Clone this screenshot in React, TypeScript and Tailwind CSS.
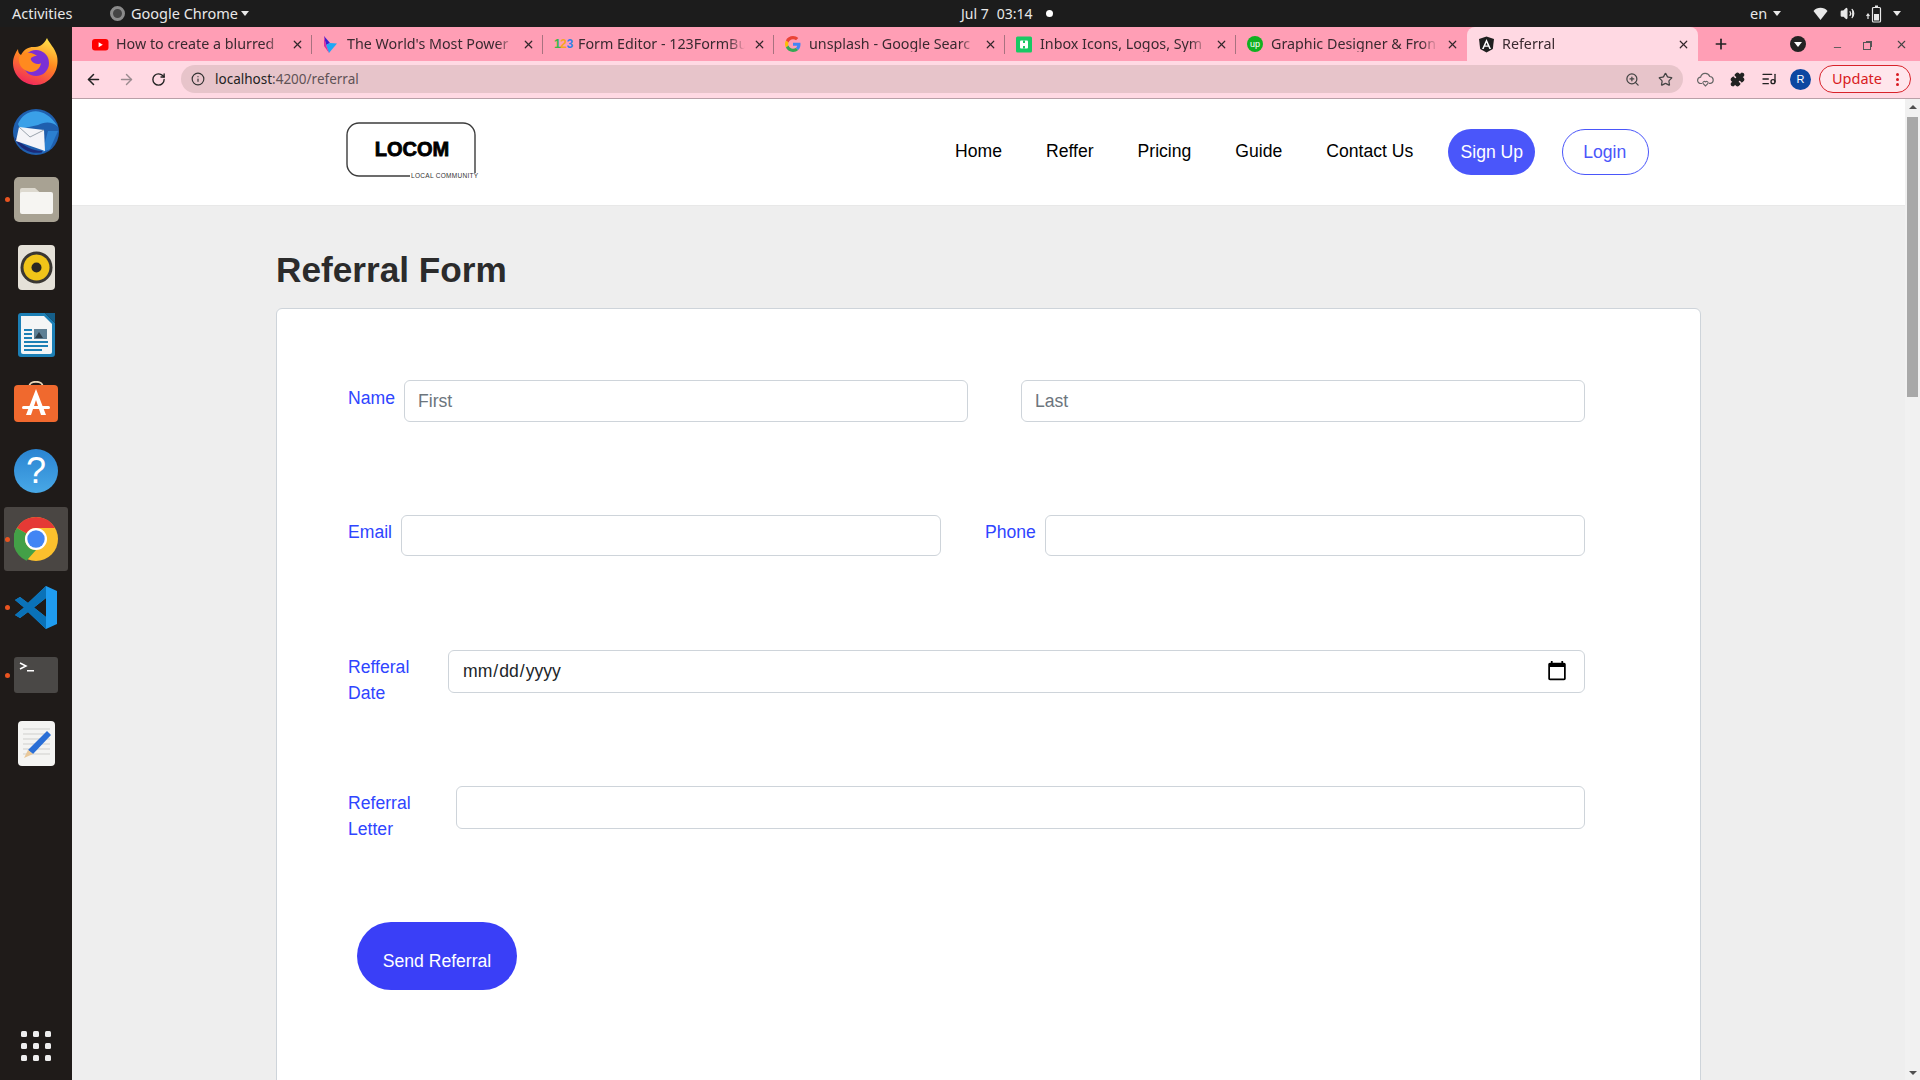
import { ArrowLeft, ArrowRight, RotateCw, Info, ZoomIn, Star, Puzzle, ListMusic, X, Plus, Minus, Volume2 } from "lucide-react";
import type { ReactNode } from "react";

const ubuntu = "font-['Noto_Sans','Open_Sans',sans-serif]";

function YouTubeIcon() {
  return (
    <svg width="17" height="17" viewBox="0 0 17 17">
      <rect x="0" y="3" width="16.500" height="11.500" rx="3" fill="#f00" />
      <path d="M6.600 6.200 L10.800 8.700 L6.600 11.200 Z" fill="#fff" />
    </svg>
  );
}

function ArrowLogo() {
  return (
    <svg width="16" height="17" viewBox="0 0 16 17">
      <path d="M1 0 L7 7 L3 9 Z" fill="#3a1fd1" />
      <path d="M3 9 L7 7 L14 7.500 L6 17 Z" fill="#1fa8f5" />
      <path d="M1 0 L3 9 L6 17 L1 10 Z" fill="#d62fa0" />
    </svg>
  );
}

function FormBuilderIcon() {
  return (
    <span className="flex items-center font-['Liberation_Sans',sans-serif] text-[12px] leading-none font-bold tracking-[-0.500px]">
      <span className="text-[#39b54a]">1</span>
      <span className="text-[#f5a623]">2</span>
      <span className="text-[#2f80ed]">3</span>
    </span>
  );
}

function GoogleIcon() {
  return (
    <svg width="16" height="16" viewBox="0 0 48 48">
      <path fill="#EA4335" d="M24 9.500c3.500 0 6.700 1.300 9.100 3.500l6.800-6.800C35.800 2.400 30.300 0 24 0 14.600 0 6.500 5.400 2.600 13.200l7.900 6.200C12.400 13.700 17.700 9.500 24 9.500z" />
      <path fill="#4285F4" d="M46.500 24.500c0-1.600-.2-3.200-.4-4.500H24v9h12.700c-.6 3-2.200 5.500-4.700 7.200l7.600 5.900c4.400-4.100 6.900-10.100 6.900-17.600z" />
      <path fill="#FBBC05" d="M10.500 28.600c-.5-1.400-.8-3-.8-4.600s.3-3.200.8-4.600l-7.900-6.200C.9 16.500 0 20.100 0 24s.9 7.500 2.600 10.800l7.900-6.200z" />
      <path fill="#34A853" d="M24 48c6.500 0 11.900-2.100 15.600-5.900L32 36.200c-2.100 1.400-4.800 2.300-8 2.300-6.300 0-11.600-4.200-13.500-9.900l-7.900 6.200C6.500 42.600 14.600 48 24 48z" />
    </svg>
  );
}

function InboxIcon() {
  return (
    <svg width="16" height="17" viewBox="0 0 16 17">
      <rect x="0" y="0.500" width="16" height="16" rx="1.500" fill="#18c964" />
      <rect x="4" y="4.500" width="8" height="8" rx="1" fill="#fff" />
      <rect x="7" y="4.500" width="2" height="2.500" fill="#18c964" />
      <rect x="7" y="10" width="2" height="2.500" fill="#18c964" />
    </svg>
  );
}

function UpworkIcon() {
  return (
    <span className="flex h-[16px] w-[16px] items-center justify-center rounded-full bg-[#10b020] font-['Liberation_Sans',sans-serif] text-[9px] leading-none text-white">
      up
    </span>
  );
}

function AngularIcon() {
  return (
    <svg width="17" height="17" viewBox="0 0 17 17">
      <path d="M8.500 0.500 L16 3 L14.800 13 L8.500 16.500 L2.200 13 L1 3 Z" fill="#1f1f1f" />
      <path d="M8.500 3 L4 13 L5.700 13 L6.600 10.800 L10.400 10.800 L11.300 13 L13 13 Z M7.300 9.400 L8.500 6.500 L9.700 9.400 Z" fill="#fff" />
    </svg>
  );
}

function Tab({ icon, title, active, divider }: { icon: ReactNode; title: string; active?: boolean; divider?: boolean }) {
  return (
    <div className={`relative flex h-full w-[231px] shrink-0 items-center pl-[11px] ${active ? "rounded-t-lg bg-[#ffd9e3]" : ""}`}>
      <span className="flex w-[24px] shrink-0 items-center">{icon}</span>
      <span className="w-[167px] text-[14.300px] leading-[16px] whitespace-nowrap text-[#3a2a30] [mask-image:linear-gradient(to_right,black_90%,transparent)]">
        {title}
      </span>
      <X size={13} strokeWidth={2.200} className="ml-[8px] text-[#33272b]" />
      {divider && <span className="absolute top-[8px] right-0 h-[19px] w-px bg-[#a8727f]" />}
    </div>
  );
}

function FirefoxIcon() {
  return (
    <svg width="46" height="48" viewBox="0 0 46 48" className="-mt-[2px]">
      <defs>
        <linearGradient id="ffA" x1="0.700" y1="0" x2="0.300" y2="1">
          <stop offset="0" stopColor="#ffe14a" />
          <stop offset="0.450" stopColor="#ff8a1f" />
          <stop offset="1" stopColor="#f0245f" />
        </linearGradient>
      </defs>
      <path d="M34 0 C36 5 42 10 44 18 C47 32 37 47 23 47 C10 47 0 37 0 25 C0 19 3 14 5 11 C5 14 6 16 8 17 C11 11 16 9 20 9 C26 9 30 8 34 0Z" fill="url(#ffA)" />
      <circle cx="23" cy="25" r="13" fill="#7b2fd6" />
      <path d="M6 19 C12 13 20 14 24 18 C20 18 17 20 18 22 C20 26 26 27 28 25 C27 32 20 36 14 33 C8 31 5 25 6 19Z" fill="#ff8a1f" />
    </svg>
  );
}

function ThunderbirdIcon() {
  return (
    <svg width="48" height="48" viewBox="0 0 48 48">
      <circle cx="24" cy="25" r="23" fill="#1f5fae" />
      <path d="M6 17 C12 2 32 -3 46 20 C40 14 32 15 26 18 L8 22Z" fill="#3aa0e8" />
      <path d="M2 30 C14 42 26 46 36 43 C28 48 10 48 2 30Z" fill="#1b2a78" />
      <path d="M36 24 L46 24 L38 42 L30 46Z" fill="#2b7fd0" />
      <path d="M7 20 L32 23 L33 44 L4 34 Z" fill="#f4f4f8" />
      <path d="M7 20 L18 30 L32 23" fill="none" stroke="#9aa3ad" strokeWidth="1" />
    </svg>
  );
}

function FilesIcon() {
  return (
    <svg width="45" height="45" viewBox="0 0 45 45">
      <rect width="45" height="45" rx="5" fill="#a8a293" />
      <path d="M6 13 a2 2 0 0 1 2-2 h13 l5 4.500 v6 H6Z" fill="#ddd9cf" />
      <rect x="6" y="15" width="33" height="22" rx="2" fill="#f6f5f2" />
    </svg>
  );
}

function RhythmboxIcon() {
  return (
    <svg width="37" height="45" viewBox="0 0 37 45">
      <rect width="37" height="45" rx="4" fill="#e5e1d8" />
      <circle cx="18.500" cy="22.500" r="16" fill="#3a3733" />
      <circle cx="18.500" cy="22.500" r="13" fill="#f0c419" />
      <circle cx="18.500" cy="22.500" r="5" fill="#2a2723" />
    </svg>
  );
}

function WriterIcon() {
  return (
    <svg width="37" height="44" viewBox="0 0 37 44">
      <path d="M3 0 H27 L37 10 V41 a3 3 0 0 1-3 3 H3 a3 3 0 0 1-3-3 V3 a3 3 0 0 1 3-3Z" fill="#1c7fb5" />
      <path d="M3 3 H26 L34 11 V39 a2 2 0 0 1-2 2 H5 a2 2 0 0 1-2-2Z" fill="#f4f5f6" />
      <path d="M27 0 L37 0 V10Z" fill="#155f8a" />
      <rect x="6" y="16" width="8" height="2" fill="#1c7fb5" />
      <rect x="6" y="20" width="8" height="2" fill="#1c7fb5" />
      <rect x="6" y="24" width="8" height="2" fill="#1c7fb5" />
      <rect x="16" y="16" width="13" height="10" fill="#5d7f95" />
      <path d="M17 25 L21 19 L25 25Z" fill="#2d3e4a" />
      <rect x="6" y="28" width="24" height="2" fill="#1c7fb5" />
      <rect x="6" y="32" width="24" height="2" fill="#1c7fb5" />
      <rect x="6" y="36" width="18" height="2" fill="#1c7fb5" />
    </svg>
  );
}

function SoftwareIcon() {
  return (
    <svg width="44" height="42" viewBox="0 0 44 42" className="-mt-[3px]">
      <path d="M15 6 C15 -1 29 -1 29 6" fill="none" stroke="#e8d6b8" strokeWidth="1.800" />
      <rect y="4" width="44" height="37" rx="4" fill="#f0692e" />
      <path d="M22 8 L12 34 H17 L22 19 L27 34 H32Z" fill="#fff" />
      <rect x="8" y="25" width="28" height="3" rx="1.500" fill="#fff" />
    </svg>
  );
}

function HelpIcon() {
  return (
    <span className="flex h-[44px] w-[44px] items-center justify-center rounded-full bg-[linear-gradient(#2a84d2,#48a8e6)] font-['Liberation_Sans',sans-serif] text-[36px] leading-none text-white">
      ?
    </span>
  );
}

function ChromeIcon() {
  return (
    <svg width="44" height="44" viewBox="0 0 48 48">
      <circle cx="24" cy="24" r="24" fill="#fbc02d" />
      <path d="M24 0 A24 24 0 0 1 44.800 12 H24 A12 12 0 0 0 13.600 18 L3.200 12 A24 24 0 0 1 24 0Z" fill="#e53935" />
      <path d="M3.200 12 L13.600 18 A12 12 0 0 0 24 36 L13.600 47.600 A24 24 0 0 1 3.200 12Z" fill="#43a047" />
      <circle cx="24" cy="24" r="12" fill="#fff" />
      <circle cx="24" cy="24" r="9.500" fill="#4285f4" />
    </svg>
  );
}

function VSCodeIcon() {
  return (
    <svg width="42" height="43" viewBox="0 0 42 43">
      <path d="M31 0 L42 5 V38 L31 43 L13 26 L5 32 L0 29 L9 21.500 L0 14 L5 11 L13 17Z M31 12 L19 21.500 L31 31Z" fill="#1f9cf0" />
      <path d="M31 0 L13 17 L5 11 L0 14 L9 21.500 L0 29 L5 32 L13 26 L31 43 L31 31 L19 21.500 L31 12Z" fill="#0a72b8" />
    </svg>
  );
}

function TerminalIcon() {
  return (
    <svg width="44" height="36" viewBox="0 0 44 36">
      <rect width="44" height="36" rx="3" fill="#4a4846" />
      <path d="M6 6 L12 9 L6 12" fill="none" stroke="#fff" strokeWidth="1.500" />
      <rect x="13" y="13" width="7" height="1.500" fill="#fff" />
    </svg>
  );
}

function EditorIcon() {
  return (
    <svg width="37" height="45" viewBox="0 0 37 45">
      <rect width="37" height="45" rx="4" fill="#f4f4f2" />
      <path d="M5 8 H32 M5 13 H32 M5 18 H32 M5 23 H32 M5 28 H32 M5 33 H32" stroke="#cfcfcc" strokeWidth="1" />
      <path d="M29 10 L33 14 L15 33 L10 29Z" fill="#2a6fd6" />
      <path d="M10 29 L15 33 L6 37Z" fill="#e8c89a" />
    </svg>
  );
}

function WifiFan() {
  return (
    <svg width="15" height="15" viewBox="0 0 15 15">
      <path d="M0.500 5 C4 0.800 11 0.800 14.500 5 L7.500 14 Z" fill="#e8e8e8" />
    </svg>
  );
}

function PhoneBattery() {
  return (
    <svg width="16" height="18" viewBox="0 0 16 18">
      <path d="M2 9 V14 M0.500 11 L2 9 L3.500 11" fill="none" stroke="#e8e8e8" strokeWidth="1.200" />
      <rect x="6.500" y="2.500" width="8" height="14.500" rx="1" fill="none" stroke="#e8e8e8" strokeWidth="1.200" />
      <rect x="9" y="0.500" width="3" height="2" fill="#e8e8e8" />
      <rect x="8" y="9" width="5" height="6.500" fill="#e8e8e8" />
    </svg>
  );
}

function CloudHeart() {
  return (
    <svg width="17" height="15" viewBox="0 0 17 15" className="ml-[14px]">
      <path d="M5 11.500 H4 a3.200 3.200 0 0 1-.4-6.400 a4.800 4.800 0 0 1 9.200-.6 a3.500 3.500 0 0 1 .7 6.900 H12" fill="none" stroke="#666" strokeWidth="1.200" />
      <path d="M8.500 14 L6 11.500 a1.500 1.500 0 0 1 2.500-1.600 a1.500 1.500 0 0 1 2.500 1.600Z" fill="none" stroke="#666" strokeWidth="1.100" />
    </svg>
  );
}

function DockItem({ children, running, active }: { children: ReactNode; running?: boolean; active?: boolean }) {
  return (
    <div className="relative flex h-[68px] w-full items-center justify-center">
      {active && <span className="absolute inset-x-[4px] top-[2px] bottom-[2px] rounded-[3px] bg-[#4a4643]" />}
      <span className="relative flex">{children}</span>
      {running && <span className="absolute top-[32px] left-[5px] h-[5px] w-[5px] rounded-full bg-[#e95420]" />}
    </div>
  );
}

function Logo() {
  return (
    <svg width="134" height="60" viewBox="0 0 134 60" className="shrink-0">
      <path d="M64 54 H13 a12 12 0 0 1-12-12 V13 a12 12 0 0 1 12-12 H117 a12 12 0 0 1 12 12 V51" fill="none" stroke="#3c3c3c" strokeWidth="1.400" />
      <text x="66" y="34" textAnchor="middle" fontFamily="Liberation Sans" fontWeight="700" fontSize="20" stroke="#000" strokeWidth="0.800">LOCOM</text>
      <text x="65" y="56" fontFamily="Liberation Sans" fontSize="6.500" letterSpacing="0.300" fill="#333">LOCAL COMMUNITY</text>
    </svg>
  );
}

const inputCls = "h-full rounded-[6px] border border-[#ced4da] bg-white px-[13px] text-[17.600px] text-[#212529] outline-none placeholder:text-[#6c757d]";
const labelCls = "shrink-0 text-[17.600px] leading-[26.400px] text-[#2f45ff]";

export default function App() {
  return (
    <div className="flex h-screen w-screen flex-col overflow-hidden font-['Liberation_Sans',sans-serif]">
      {/* ubuntu top bar */}
      <div className={`flex h-[27px] shrink-0 items-center bg-[#1c1c1c] text-[14.500px] whitespace-nowrap text-[#e8e8e8] ${ubuntu}`}>
        <div className="flex w-[961px] shrink-0 items-center pl-[12px]">
          <span className="w-[98px]">Activities</span>
          <span className="mr-[6px] h-[15px] w-[15px] rounded-full border-[3px] border-[#8b8b8b] bg-[#444]" />
          <span className="w-[110px]">Google Chrome</span>
          <span className="border-x-[4px] border-t-[5px] border-x-transparent border-t-[#e8e8e8]" />
        </div>
        <div className="flex w-[789px] shrink-0 items-center text-[14px]">
          <span>Jul 7</span>
          <span className="ml-[8px]">03:14</span>
          <span className="ml-[13px] h-[7px] w-[7px] rounded-full bg-white" />
        </div>
        <span>en</span>
        <span className="ml-[6px] border-x-[4px] border-t-[5px] border-x-transparent border-t-[#e8e8e8]" />
        <span className="ml-[32px] flex"><WifiFan /></span>
        <Volume2 size={15} className="ml-[12px]" fill="#e8e8e8" />
        <span className="ml-[11px] flex"><PhoneBattery /></span>
        <span className="ml-[11px] border-x-[4px] border-t-[5px] border-x-transparent border-t-[#e8e8e8]" />
      </div>

      <div className="flex min-h-0 flex-1">
        {/* dock */}
        <div className="flex w-[72px] shrink-0 flex-col items-center bg-[#1f1b19] pt-[2px]">
          <DockItem><FirefoxIcon /></DockItem>
          <DockItem><ThunderbirdIcon /></DockItem>
          <DockItem running><FilesIcon /></DockItem>
          <DockItem><RhythmboxIcon /></DockItem>
          <DockItem><WriterIcon /></DockItem>
          <DockItem><SoftwareIcon /></DockItem>
          <DockItem><HelpIcon /></DockItem>
          <DockItem running active><ChromeIcon /></DockItem>
          <DockItem running><VSCodeIcon /></DockItem>
          <DockItem running><TerminalIcon /></DockItem>
          <DockItem><EditorIcon /></DockItem>
          <div className="mt-auto mb-[19px] grid grid-cols-3 gap-[6px]">
            {Array.from({ length: 9 }).map((_, i) => (
              <span key={i} className="h-[6px] w-[6px] rounded-[1.500px] bg-[#eeeeee]" />
            ))}
          </div>
        </div>

        <div className="flex min-w-0 flex-1 flex-col">
          {/* tab strip */}
          <div className={`flex h-[34px] shrink-0 items-center bg-[#ff9eb5] pl-[9px] ${ubuntu}`}>
            <Tab icon={<YouTubeIcon />} title="How to create a blurred" divider />
            <Tab icon={<ArrowLogo />} title="The World's Most Power" divider />
            <Tab icon={<FormBuilderIcon />} title="Form Editor - 123FormBu" divider />
            <Tab icon={<GoogleIcon />} title="unsplash - Google Searc" divider />
            <Tab icon={<InboxIcon />} title="Inbox Icons, Logos, Sym" divider />
            <Tab icon={<UpworkIcon />} title="Graphic Designer & Fron" />
            <Tab icon={<AngularIcon />} title="Referral" active />
            <Plus size={16} strokeWidth={2.500} className="ml-[15px] text-[#222]" />
            <span className="ml-[61px] flex h-[16px] w-[16px] items-center justify-center rounded-full bg-[#222]">
              <span className="border-x-[4px] border-t-[5px] border-x-transparent border-t-white" />
            </span>
            <Minus size={11} strokeWidth={2} className="mt-[7px] ml-[26px] text-[#555]" />
            <span className="ml-[20px] flex h-[11px] w-[11px] items-end">
              <span className="h-[8px] w-[8px] border border-[#555] bg-[#ff9eb5] shadow-[2px_-2px_0_-1px_#555]" />
            </span>
            <X size={13} strokeWidth={2} className="ml-[21px] text-[#444]" />
          </div>

          {/* toolbar */}
          <div className="flex h-[38px] shrink-0 items-center border-b border-[#b9a0a8] bg-[#ffd9e3] pb-[1px]">
            <ArrowLeft size={17} strokeWidth={2.200} className="ml-[13px] text-[#222]" />
            <ArrowRight size={17} strokeWidth={2} className="ml-[16px] text-[#9a8a8f]" />
            <RotateCw size={15} strokeWidth={2.200} className="ml-[16px] text-[#222]" />
            <div className={`ml-[15px] flex h-[28px] w-[1502px] items-center rounded-full bg-[#e7c4ca] ${ubuntu}`}>
              <Info size={14} strokeWidth={2} className="ml-[10px] text-[#333]" />
              <span className="ml-[10px] pt-[1px] text-[13.500px] leading-none text-[#222]">
                localhost<span className="text-[#5f5256]">:4200/referral</span>
              </span>
              <ZoomIn size={15} className="mr-[18px] ml-auto text-[#444]" />
              <Star size={15} className="mr-[10px] text-[#444]" />
            </div>
            <CloudHeart />
            <Puzzle size={15} fill="#222" className="ml-[16px] text-[#222]" />
            <ListMusic size={16} className="ml-[16px] text-[#222]" />
            <span className="ml-[13px] flex h-[21px] w-[21px] items-center justify-center rounded-full bg-[#0d47a1] text-[11px] text-white">R</span>
            <div className={`ml-[8px] flex h-[28px] w-[92px] items-center justify-between rounded-full border border-[#d8232a] bg-[#ffe6ec] pr-[11px] pl-[12px] text-[14.500px] text-[#d81b22] ${ubuntu}`}>
              Update
              <span className="flex flex-col gap-[2px]">
                <span className="h-[3px] w-[3px] rounded-full bg-[#d81b22]" />
                <span className="h-[3px] w-[3px] rounded-full bg-[#d81b22]" />
                <span className="h-[3px] w-[3px] rounded-full bg-[#d81b22]" />
              </span>
            </div>
          </div>

          <div className="flex min-h-0 flex-1">
            <div className="min-w-0 flex-1 overflow-hidden bg-[#eeeeee]">
              {/* site header */}
              <header className="flex h-[107px] items-start border-b border-[#e8e8e8] bg-white pl-[274px]">
                <div className="mt-[23px]"><Logo /></div>
                <nav className="mt-[30px] ml-[475px] flex items-center gap-[44px] text-[17.600px] leading-[44px] text-black">
                  <a>Home</a>
                  <a>Reffer</a>
                  <a>Pricing</a>
                  <a>Guide</a>
                  <a>Contact Us</a>
                </nav>
                <button className="mt-[30px] ml-[35px] h-[46px] w-[87px] rounded-full bg-[#4a56fa] text-[17.600px] text-white">Sign Up</button>
                <button className="mt-[30px] ml-[27px] h-[46px] w-[87px] rounded-full border border-[#4a56fa] bg-white pr-[2px] text-[17.600px] text-[#4a56fa]">Login</button>
              </header>

              <div className="ml-[204px] w-[1425px]">
                <h1 className="mt-[42px] mb-[16px] text-[35.200px] leading-[44px] font-bold text-[#2b2b2b]">Referral Form</h1>
                <div className="h-[800px] rounded-t-[6px] border border-[#ced4da] bg-white pt-[71px] pl-[71px]">
                  <div className="flex h-[42px] w-[1237px] items-start">
                    <label className={`${labelCls} mt-[5px] w-[56px]`}>Name</label>
                    <input placeholder="First" className={`${inputCls} w-[564px]`} />
                    <input placeholder="Last" className={`${inputCls} ml-[53px] w-[564px]`} />
                  </div>
                  <div className="mt-[93px] flex h-[41px] w-[1237px] items-start">
                    <label className={`${labelCls} mt-[4px] w-[53px]`}>Email</label>
                    <input className={`${inputCls} w-[540px]`} />
                    <label className={`${labelCls} mt-[4px] ml-[44px] w-[60px]`}>Phone</label>
                    <input className={`${inputCls} w-[540px]`} />
                  </div>
                  <div className="mt-[94px] flex h-[43px] w-[1237px] items-start">
                    <label className={`${labelCls} mt-[4px] w-[100px]`}>Refferal<br />Date</label>
                    <input type="date" className={`${inputCls} flex-1 pr-[16px] [&::-webkit-calendar-picker-indicator]:h-[22px] [&::-webkit-calendar-picker-indicator]:w-[22px] [&::-webkit-calendar-picker-indicator]:p-0`} />
                  </div>
                  <div className="mt-[93px] flex h-[43px] w-[1237px] items-start">
                    <label className={`${labelCls} mt-[4px] w-[108px]`}>Referral<br />Letter</label>
                    <input className={`${inputCls} flex-1`} />
                  </div>
                  <button className="mt-[93px] ml-[9px] h-[68px] w-[160px] rounded-full bg-[#3a3ff7] pt-[10px] text-[17.600px] text-white">Send Referral</button>
                </div>
              </div>
            </div>

            {/* page scrollbar */}
            <div className="flex w-[15px] shrink-0 flex-col items-center bg-[#f1f1f1]">
              <span className="mt-[6px] border-x-[4px] border-b-[4px] border-x-transparent border-b-[#505050]" />
              <span className="mt-[8px] h-[280px] w-[11px] bg-[#a8a8a8]" />
              <span className="mt-auto mb-[5px] border-x-[4px] border-t-[4px] border-x-transparent border-t-[#505050]" />
            </div>
          </div>
        </div>
      </div>
    </div>
  );
}
